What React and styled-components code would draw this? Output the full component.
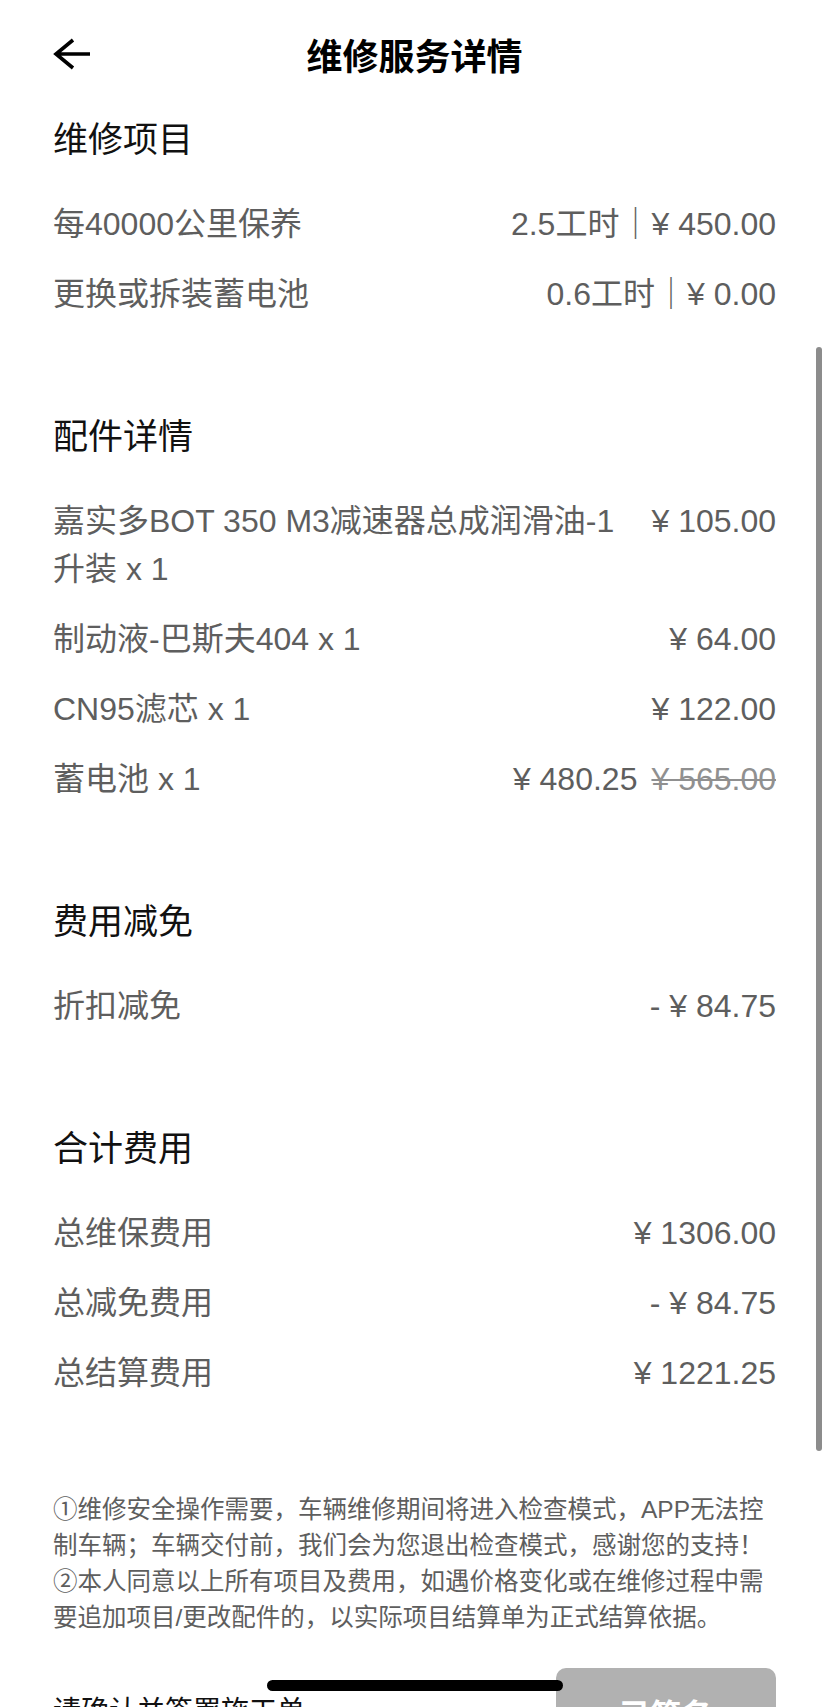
import React from "react";
import styled, { createGlobalStyle } from "styled-components";

const GlobalStyle = createGlobalStyle`
  html, body {
    margin: 0;
    padding: 0;
    background: #ffffff;
    overflow: hidden;
  }
  body {
    font-family: "Liberation Sans", "Noto Sans CJK SC", sans-serif;
    -webkit-font-smoothing: antialiased;
  }
  * { box-sizing: border-box; }
`;

const Page = styled.div`
  width: 828px;
  min-height: 1707px;
  padding: 0 52px 0 53px;
  background: #fff;
  display: flex;
  flex-direction: column;
`;

const Header = styled.header`
  height: 108px;
  display: grid;
  grid-template-columns: 1fr auto 1fr;
  align-items: center;
`;

const BackButton = styled.button`
  justify-self: start;
  width: 40px;
  height: 34px;
  padding: 0;
  margin: 0;
  border: none;
  background: transparent;
  display: flex;
  align-items: center;
  color: #000;
`;

const Title = styled.h1`
  margin: 0;
  font-size: 36px;
  line-height: 48px;
  font-weight: 700;
  color: #000;
  font-family: "Noto Sans CJK SC", sans-serif;
`;

const Section = styled.section`
  margin-top: ${(p) => p.$top}px;
  display: flex;
  flex-direction: column;
`;

const Heading = styled.h2`
  margin: 0;
  font-size: 35px;
  line-height: 48px;
  font-weight: 400;
  color: #111;
  font-family: "Noto Sans CJK SC", sans-serif;
`;

const RowList = styled.div`
  margin-top: 39px;
  display: flex;
  flex-direction: column;
  gap: 22px;
`;

const Row = styled.div`
  display: grid;
  grid-template-columns: 1fr auto;
  column-gap: 30px;
  font-size: 32px;
  line-height: 48px;
  color: #5e5e5e;
`;

const Label = styled.div`
  min-width: 0;
`;

const Value = styled.div`
  text-align: right;
  white-space: nowrap;
`;

const Bar = styled.span`
  font-family: "Noto Sans CJK SC", sans-serif;
  line-height: 1;
`;

const Strike = styled.span`
  margin-left: 14px;
  color: #909090;
  text-decoration: line-through;
  text-decoration-thickness: 2px;
`;

const Notes = styled.div`
  margin-top: 95px;
  font-size: 24.5px;
  line-height: 36px;
  color: #5e5e5e;
`;

const NoteLine = styled.p`
  margin: 0;
`;

const BottomBar = styled.div`
  margin-top: 32px;
  display: flex;
  align-items: center;
  justify-content: space-between;
`;

const ConfirmText = styled.div`
  font-size: 28px;
  line-height: 40px;
  color: #111;
`;

const SignButton = styled.button`
  width: 220px;
  height: 88px;
  border: none;
  border-radius: 10px;
  background: #b1b1b1;
  color: #fff;
  font-size: 31px;
  font-weight: 700;
  font-family: "Noto Sans CJK SC", sans-serif;
`;

const ScrollThumb = styled.div`
  position: fixed;
  top: 347px;
  right: 6px;
  width: 6px;
  height: 1104px;
  border-radius: 3px;
  background: #8c8c8c;
`;

const HomeIndicator = styled.div`
  position: fixed;
  left: 267px;
  bottom: 16px;
  width: 296px;
  height: 11px;
  border-radius: 6px;
  background: #000;
`;

const BackArrow = () => (
  <svg width="38" height="32" viewBox="0 0 38 32" fill="none">
    <path
      d="M20 2 L3 16 L20 30 M3 16 H37"
      stroke="#000"
      strokeWidth="3.6"
      strokeLinejoin="miter"
      strokeLinecap="butt"
    />
  </svg>
);

const sections = [
  {
    title: "维修项目",
    top: 5,
    rows: [
      { label: "每40000公里保养", hours: "2.5工时", price: "¥ 450.00" },
      { label: "更换或拆装蓄电池", hours: "0.6工时", price: "¥ 0.00" },
    ],
  },
  {
    title: "配件详情",
    top: 92,
    rows: [
      { label: "嘉实多BOT 350 M3减速器总成润滑油-1升装 x 1", price: "¥ 105.00" },
      { label: "制动液-巴斯夫404 x 1", price: "¥ 64.00" },
      { label: "CN95滤芯 x 1", price: "¥ 122.00" },
      { label: "蓄电池 x 1", price: "¥ 480.25", old: "¥ 565.00" },
    ],
  },
  {
    title: "费用减免",
    top: 92,
    rows: [{ label: "折扣减免", price: "- ¥ 84.75" }],
  },
  {
    title: "合计费用",
    top: 92,
    rows: [
      { label: "总维保费用", price: "¥ 1306.00" },
      { label: "总减免费用", price: "- ¥ 84.75" },
      { label: "总结算费用", price: "¥ 1221.25" },
    ],
  },
];

export default function App() {
  return (
    <>
      <GlobalStyle />
      <Page>
        <Header>
          <BackButton aria-label="返回">
            <BackArrow />
          </BackButton>
          <Title>维修服务详情</Title>
          <span />
        </Header>

        {sections.map((s) => (
          <Section key={s.title} $top={s.top}>
            <Heading>{s.title}</Heading>
            <RowList>
              {s.rows.map((r) => (
                <Row key={r.label}>
                  <Label>{r.label}</Label>
                  <Value>
                    {r.hours && (
                      <>
                        {r.hours}
                        <Bar>｜</Bar>
                      </>
                    )}
                    {r.price}
                    {r.old && <Strike>{r.old}</Strike>}
                  </Value>
                </Row>
              ))}
            </RowList>
          </Section>
        ))}

        <Notes>
          <NoteLine>
            ①维修安全操作需要，车辆维修期间将进入检查模式，APP无法控制车辆；车辆交付前，我们会为您退出检查模式，感谢您的支持！
          </NoteLine>
          <NoteLine>
            ②本人同意以上所有项目及费用，如遇价格变化或在维修过程中需要追加项目/更改配件的，以实际项目结算单为正式结算依据。
          </NoteLine>
        </Notes>

        <BottomBar>
          <ConfirmText>请确认并签署施工单</ConfirmText>
          <SignButton>已签名</SignButton>
        </BottomBar>
      </Page>
      <ScrollThumb />
      <HomeIndicator />
    </>
  );
}
